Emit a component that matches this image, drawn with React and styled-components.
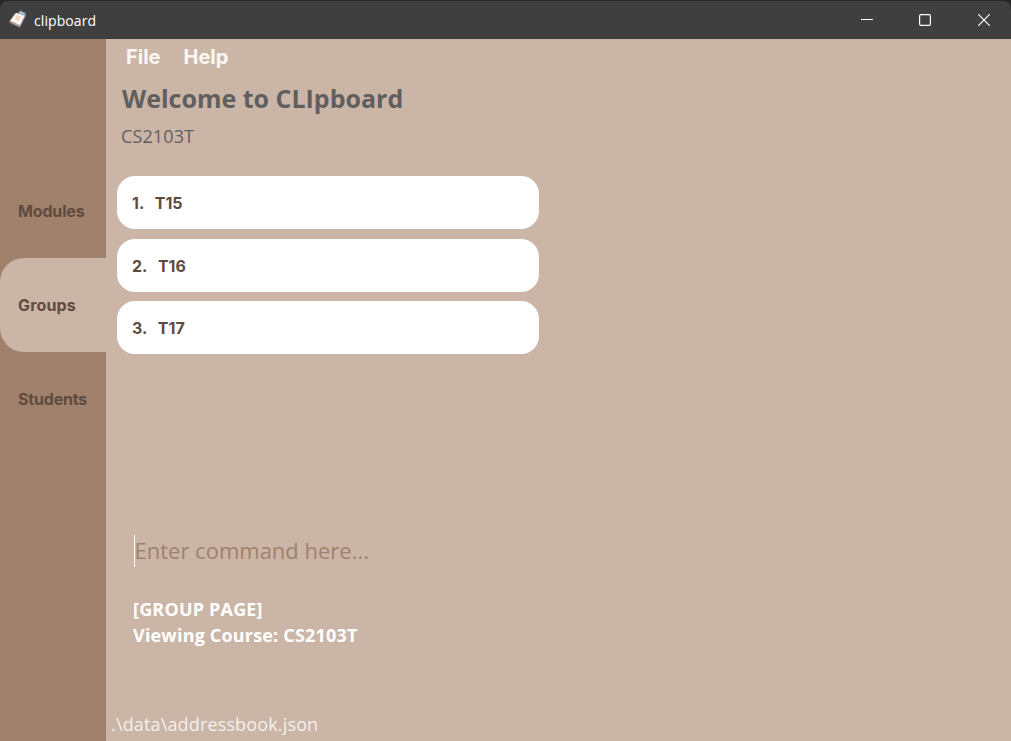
import React from "react";
import styled, { createGlobalStyle } from "styled-components";

const GlobalStyle = createGlobalStyle`
  *, *::before, *::after { box-sizing: border-box; }
  body { margin: 0; background: #262626; }
`;

const Window = styled.div`
  display: flex;
  flex-direction: column;
  width: 1011px;
  height: 741px;
  overflow: hidden;
  font-family: "Open Sans", "Noto Sans", sans-serif;
`;

const TitleBar = styled.header`
  display: flex;
  align-items: center;
  height: 38px;
  margin-top: 1px;
  padding-left: 8px;
  border-radius: 8px 8px 0 0;
  background: #3f3f3f;
  color: #fff;
  flex: none;
`;

const WindowTitle = styled.span`
  flex: 1;
  margin-left: 7px;
  padding-top: 1px;
  font-size: 14px;
  line-height: 20px;
  letter-spacing: 0.08px;
`;

const WindowControls = styled.div`
  display: flex;
  margin-right: -2px;
`;

const WindowButton = styled.button`
  display: grid;
  place-items: center;
  width: 58.5px;
  height: 38px;
  padding: 0;
  border: 0;
  background: none;
  color: #fff;
`;

const Body = styled.div`
  display: flex;
  flex: 1;
  min-height: 0;
  background: #cbb5a7;
`;

const Sidebar = styled.nav`
  width: 106px;
  padding-top: 125px;
  background: #a0816c;
`;

const Tab = styled.div`
  display: flex;
  align-items: center;
  height: 94px;
  padding-left: 18px;
  border-radius: 24px 0 0 24px;
  background: ${(p) => (p.$active ? "#cbb5a7" : "transparent")};
  color: #5f4b3e;
  font: 700 16px/20px Inter, sans-serif;
  letter-spacing: ${(p) => p.$tracking};
`;

const Main = styled.main`
  display: flex;
  flex-direction: column;
  flex: 1;
`;

const MenuBar = styled.div`
  display: flex;
  gap: 23px;
  height: 36px;
  padding-left: 20px;
`;

const MenuItem = styled.span`
  color: #fbf7f5;
  font: 700 20px/36px Inter, sans-serif;
`;

const Heading = styled.h1`
  margin: 5px 0 0 16px;
  color: #5f5f5f;
  font-size: 25px;
  font-weight: 700;
  line-height: 36px;
`;

const Course = styled.p`
  margin: 8px 0 0 15px;
  color: #5f5f5f;
  font-size: 18px;
  line-height: 25px;
  letter-spacing: 0.12px;
`;

const GroupList = styled.div`
  display: grid;
  gap: 9.5px;
  width: 422px;
  margin: 27px 0 0 11px;
`;

const GroupCard = styled.div`
  display: flex;
  align-items: center;
  gap: 10.5px;
  height: 53px;
  padding: 1px 0 0 15px;
  border-radius: 18px;
  background: #fff;
  color: #5f4b3e;
  font: 700 16px/20px Inter, sans-serif;
`;

const CommandInput = styled.div`
  width: 600px;
  height: 32px;
  margin: 181px 0 0 28px;
  border-left: 1px solid #fff;
  color: #a0816c;
  font-size: 22px;
  line-height: 30px;
  text-indent: -0.5px;
`;

const Result = styled.div`
  margin: 29px 0 0 27px;
  color: #fff;
  font-size: 18px;
  font-weight: 700;
  line-height: 26px;
  letter-spacing: 0.18px;
`;

const StatusBar = styled.footer`
  margin-top: auto;
  padding: 0 0 4px 5px;
  color: #f5f0ed;
  font-size: 18px;
  line-height: 25px;
  letter-spacing: 0.15px;
`;

const ClipboardIcon = () => (
  <svg width="19" height="22" viewBox="0 0 19 22">
    <path d="M1 13 7 4l11 2-6 13z" fill="#9b6f61" />
    <path d="m2 12 6-8 9 2-5 10z" fill="#f8f8f6" />
    <path d="m1 13 11 3 5-10 1 1-6 11z" fill="#aebfd0" />
    <path d="m1 14 11 4.5 6-12" fill="none" stroke="#765149" />
    <path d="m8 6 5 1-2 5-4-1z" fill="#f5d4c2" />
    <path d="m9 4 3-1 1-2 2 2 3 1-1 3z" fill="#8ba0b0" />
    <path d="m11 3 5 2" stroke="#c8d8e2" />
  </svg>
);

const groups = ["T15", "T16", "T17"];

export default function App() {
  return (
    <Window>
      <GlobalStyle />
      <TitleBar>
        <ClipboardIcon />
        <WindowTitle>clipboard</WindowTitle>
        <WindowControls>
          <WindowButton aria-label="Minimize">
            <svg width="12" height="12"><path d="M0 5.5h12" stroke="currentColor" /></svg>
          </WindowButton>
          <WindowButton aria-label="Maximize">
            <svg width="12" height="12"><rect x=".6" y=".6" width="10.8" height="10.8" rx="1.3" fill="none" stroke="currentColor" strokeWidth="1.2" /></svg>
          </WindowButton>
          <WindowButton aria-label="Close">
            <svg width="12" height="12"><path d="m.3.3 11.4 11.4m0-11.4L.3 11.7" stroke="currentColor" strokeWidth="1.2" /></svg>
          </WindowButton>
        </WindowControls>
      </TitleBar>
      <Body>
        <Sidebar>
          <Tab $tracking="-0.15px">Modules</Tab>
          <Tab $active $tracking="0.15px">Groups</Tab>
          <Tab $tracking="-0.18px">Students</Tab>
        </Sidebar>
        <Main>
          <MenuBar>
            <MenuItem>File</MenuItem>
            <MenuItem>Help</MenuItem>
          </MenuBar>
          <Heading>Welcome to CLIpboard</Heading>
          <Course>CS2103T</Course>
          <GroupList>
            {groups.map((name, index) => (
              <GroupCard key={name}>
                <span>{index + 1}.</span>
                <span>{name}</span>
              </GroupCard>
            ))}
          </GroupList>
          <CommandInput>Enter command here...</CommandInput>
          <Result>
            [GROUP PAGE]
            <br />
            Viewing Course: CS2103T
          </Result>
          <StatusBar>.\data\addressbook.json</StatusBar>
        </Main>
      </Body>
    </Window>
  );
}
